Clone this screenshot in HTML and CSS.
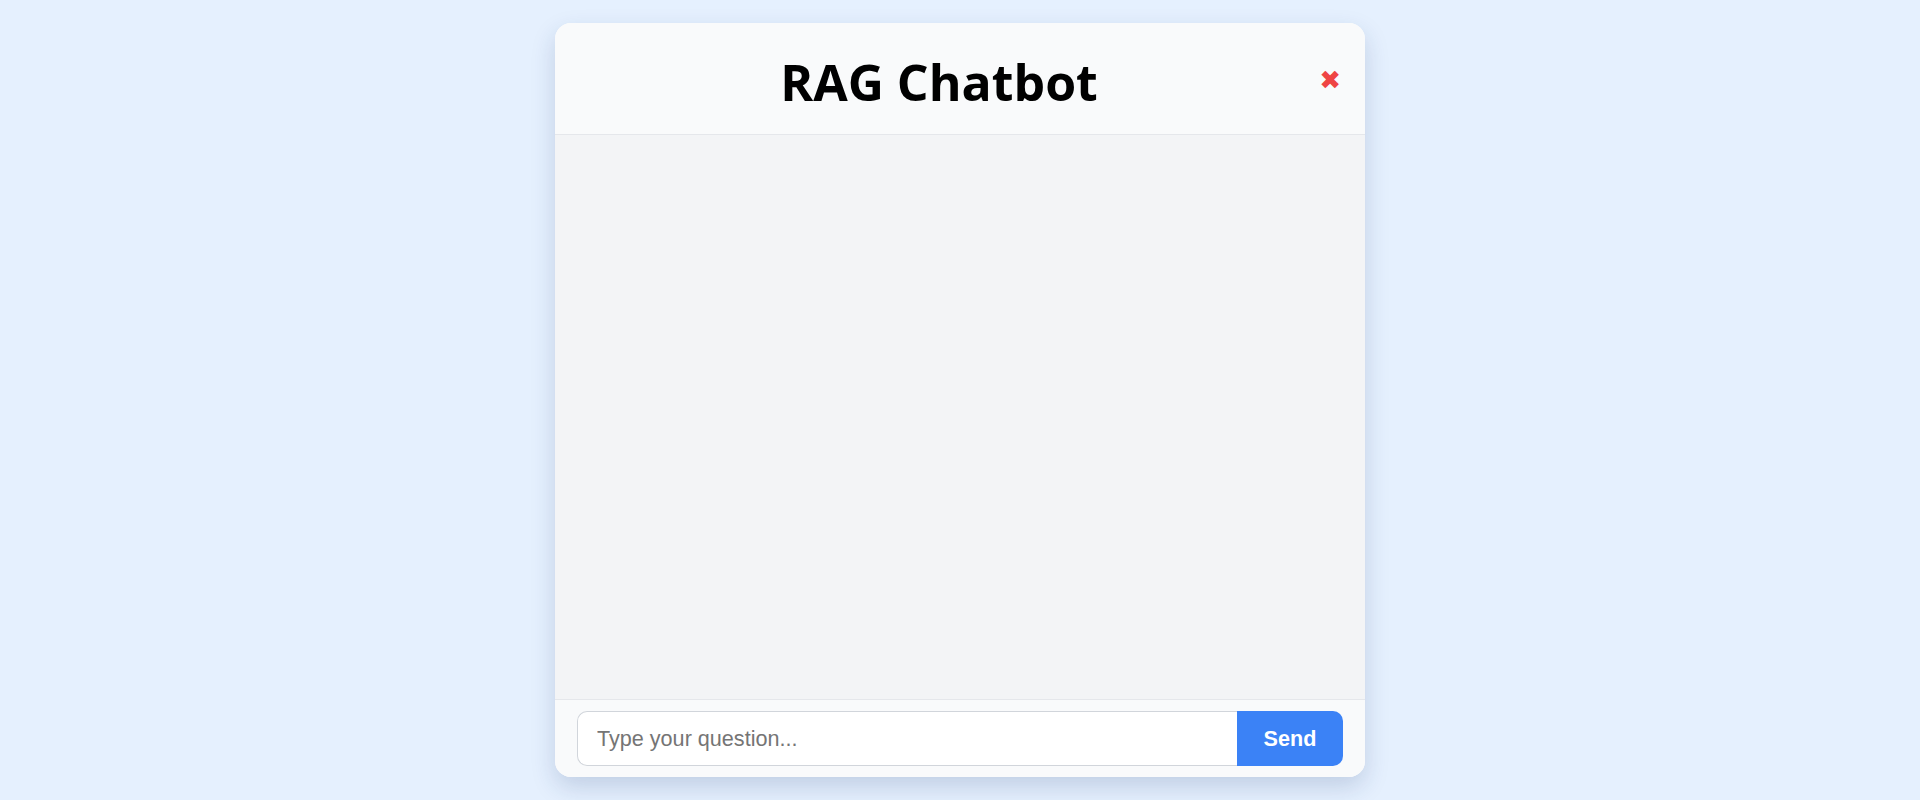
FILE: index.html
```html
<!DOCTYPE html>
<html lang="en">
<head>
<meta charset="utf-8">
<title>RAG Chatbot</title>
<link rel="stylesheet" href="styles.css">
</head>
<body>
  <div class="chat">
    <header class="chat-header">
      <h1 class="chat-title">RAG Chatbot</h1>
      <button class="close-btn" aria-label="Close">✖</button>
    </header>
    <main class="chat-messages"></main>
    <form class="chat-form">
      <input class="chat-input" type="text" placeholder="Type your question...">
      <button class="send-btn" type="button">Send</button>
    </form>
  </div>
</body>
</html>
```
FILE: styles.css
```css
* { box-sizing: border-box; }
html, body { margin: 0; padding: 0; }
body {
  background: #e5f0fe;
  height: 800px;
  display: flex;
  justify-content: center;
  padding-top: 23px;
  font-family: "Liberation Sans", Arial, sans-serif;
}
.chat {
  width: 810px;
  height: 754px;
  background: #f9fafb;
  border-radius: 16px;
  box-shadow: 0 10px 25px rgba(30, 58, 110, 0.18);
  display: flex;
  flex-direction: column;
  overflow: hidden;
}
.chat-header {
  height: 112px;
  flex: none;
  border-bottom: 1px solid #e5e7eb;
  display: flex;
  align-items: center;
  padding: 0 24px;
  background: #f9fafb;
}
.chat-title {
  flex: 1;
  margin: 0;
  text-align: center;
  font-family: "Open Sans", "Noto Sans", sans-serif;
  font-weight: 700;
  font-size: 50px;
  color: #000;
  position: relative;
  top: 3px;
}
.close-btn {
  flex: none;
  width: 42px;
  border: 0;
  background: none;
  padding: 0;
  text-align: right;
  color: #ef4444;
  font-size: 26px;
  line-height: 1;
  font-family: "DejaVu Sans", sans-serif;
  cursor: pointer;
  position: relative;
  top: 1px;
}
.chat-messages {
  flex: 1;
  background: #f3f4f6;
}
.chat-form {
  flex: none;
  height: 78px;
  border-top: 1px solid #e5e7eb;
  background: #f9fafb;
  display: flex;
  padding: 11px 22px 11px;
  margin: 0;
}
.chat-input {
  flex: 1;
  height: 55px;
  border: 1px solid #d1d5db;
  border-right: 0;
  border-radius: 10px 0 0 10px;
  padding: 0 19px;
  font-family: "Liberation Sans", Arial, sans-serif;
  font-size: 21.6px;
  color: #111827;
  background: #fff;
  outline: none;
}
.chat-input::placeholder { color: #757575; }
.send-btn {
  flex: none;
  width: 106px;
  height: 55px;
  border: 0;
  border-radius: 0 10px 10px 0;
  background: #3b82f6;
  color: #fff;
  font-family: "Liberation Sans", Arial, sans-serif;
  font-weight: 700;
  font-size: 21.6px;
  cursor: pointer;
}
```
